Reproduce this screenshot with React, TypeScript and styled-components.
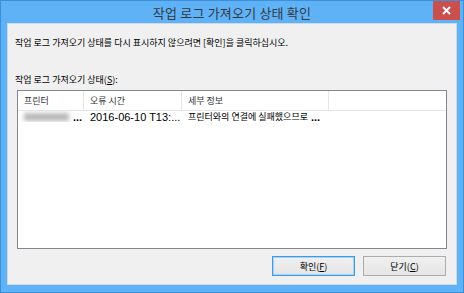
import styled, { createGlobalStyle } from "styled-components"

const GlobalStyle = createGlobalStyle`
  html, body {
    margin: 0;
    padding: 0;
    background: #ffffff;
  }
  body {
    font-family: "Noto Sans CJK KR", "Liberation Sans", sans-serif;
  }
`

const Frame = styled.div`
  width: 464px;
  height: 293px;
  box-sizing: border-box;
  background: #60b2f6;
  border: 1px solid #3c8fd9;
  display: flex;
  flex-direction: column;
  padding: 0 6px 7px 6px;
`

const TitleBar = styled.div`
  height: 23px;
  display: flex;
  align-items: center;
  justify-content: center;
  position: relative;
`

const Title = styled.div`
  font-size: 13px;
  color: #333a44;
  letter-spacing: 0.2px;
  margin-top: 1px;
`

const CloseButton = styled.div`
  position: absolute;
  right: -3px;
  top: 0;
  width: 27px;
  height: 19px;
  background: #c9504f;
  display: flex;
  align-items: center;
  justify-content: center;
`

const Client = styled.div`
  flex: 1;
  background: #f0f0f0;
  border: 1px solid #cfd9e3;
  display: flex;
  flex-direction: column;
  padding: 10px 9px 8px 7px;
  font-size: 9px;
  color: #000;
`

const Message = styled.div`
  margin-top: 2px;
`

const ListLabel = styled.div`
  margin-top: 24px;
`

const ListBox = styled.div`
  margin: 4px 0 0 2px;
  height: 157px;
  background: #ffffff;
  border: 1px solid #828790;
  display: flex;
  flex-direction: column;
`

const HeaderRow = styled.div`
  display: grid;
  grid-template-columns: 66px 98px 147px 1fr;
  height: 19px;
  border-bottom: 1px solid #e5e5e5;
`

const HeaderCell = styled.div`
  display: flex;
  align-items: center;
  padding-left: 6px;
  color: #333;
  border-right: 1px solid #e5e5e5;
  &:last-child {
    border-right: none;
  }
`

const DataRow = styled.div`
  display: grid;
  grid-template-columns: 66px 98px 147px 1fr;
  height: 11px;
  margin-top: 0;
`

const DataCell = styled.div<{ $num?: boolean }>`
  display: flex;
  align-items: center;
  padding-left: 6px;
  white-space: nowrap;
  overflow: hidden;
  font-size: ${(p) => (p.$num ? "11px" : "9px")};
  font-family: ${(p) => (p.$num ? '"Liberation Sans", sans-serif' : "inherit")};
`

const Blurred = styled.span`
  display: inline-block;
  width: 45px;
  height: 8px;
  background: #b9b9b9;
  filter: blur(2px);
  margin-right: 4px;
`

const Dots = styled.span`
  font-family: "Liberation Sans", sans-serif;
  font-size: 11px;
  font-weight: bold;
`

const ButtonRow = styled.div`
  display: flex;
  justify-content: flex-end;
  gap: 8px;
  margin-top: 7px;
  padding-right: 1px;
`

const Button = styled.div<{ $default?: boolean }>`
  width: 83px;
  height: 20px;
  box-sizing: border-box;
  display: flex;
  align-items: center;
  justify-content: center;
  background: linear-gradient(#f0f0f0, #e5e5e5);
  border: 1px solid ${(p) => (p.$default ? "#3c9be8" : "#acacac")};
  box-shadow: ${(p) => (p.$default ? "inset 0 0 0 1px #a9d2f3" : "none")};
  font-size: 9px;
  color: #000;
`

const Mnemonic = styled.span`
  text-decoration: underline;
`

export default function App() {
  return (
    <>
      <GlobalStyle />
      <Frame>
        <TitleBar>
          <Title>작업 로그 가져오기 상태 확인</Title>
          <CloseButton>
            <svg width="9" height="9" viewBox="0 0 9 9">
              <path d="M1 1 L8 8 M8 1 L1 8" stroke="#ffffff" strokeWidth="1.8" />
            </svg>
          </CloseButton>
        </TitleBar>
        <Client>
          <Message>작업 로그 가져오기 상태를 다시 표시하지 않으려면 [확인]을 클릭하십시오.</Message>
          <ListLabel>
            작업 로그 가져오기 상태(<Mnemonic>S</Mnemonic>):
          </ListLabel>
          <ListBox>
            <HeaderRow>
              <HeaderCell>프린터</HeaderCell>
              <HeaderCell>오류 시간</HeaderCell>
              <HeaderCell>세부 정보</HeaderCell>
              <HeaderCell />
            </HeaderRow>
            <DataRow>
              <DataCell>
                <Blurred />
                <Dots>...</Dots>
              </DataCell>
              <DataCell $num>2016-06-10 T13:...</DataCell>
              <DataCell>
                프린터와의 연결에 실패했으므로 <Dots>&nbsp;...</Dots>
              </DataCell>
              <DataCell />
            </DataRow>
          </ListBox>
          <ButtonRow>
            <Button $default>
              확인(<Mnemonic>F</Mnemonic>)
            </Button>
            <Button>
              닫기(<Mnemonic>C</Mnemonic>)
            </Button>
          </ButtonRow>
        </Client>
      </Frame>
    </>
  )
}
